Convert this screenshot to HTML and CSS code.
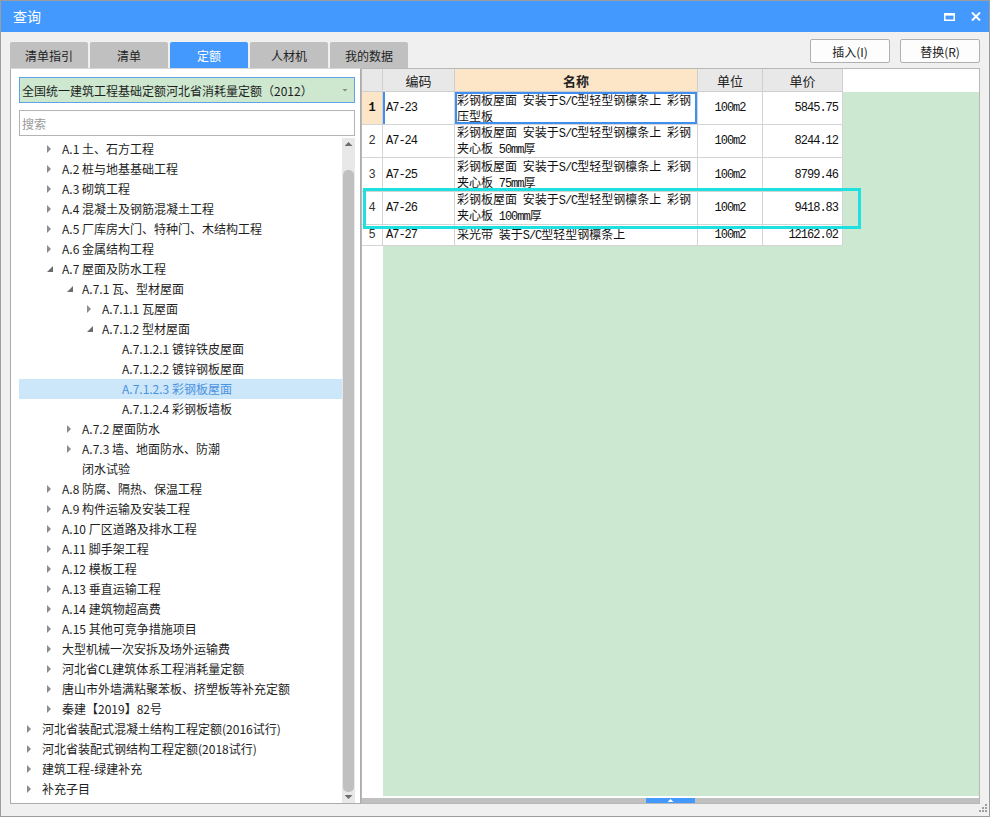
FILE: index.html
```html
<!DOCTYPE html>
<html lang="zh-CN">
<head>
<meta charset="utf-8">
<title>查询</title>
<link rel="stylesheet" href="styles.css">
</head>
<body>
<div class="window">
  <div class="titlebar">
    <span class="title">查询</span>
    <div class="winbtns">
      <svg width="11" height="8" viewBox="0 0 11 8"><path d="M0.75 1.5H10.25V7.25H0.75Z" fill="none" stroke="#fff" stroke-width="1.5"/><rect x="0" y="0" width="11" height="2.5" fill="#fff"/></svg>
      <svg width="10" height="9" viewBox="0 0 10 9"><path d="M1 0.5L9 8.5M9 0.5L1 8.5" stroke="#fff" stroke-width="2"/></svg>
    </div>
  </div>

  <div class="toolbar">
    <div class="tabs">
      <div class="tab">清单指引</div>
      <div class="tab">清单</div>
      <div class="tab active">定额</div>
      <div class="tab">人材机</div>
      <div class="tab">我的数据</div>
    </div>
    <div class="actions">
      <div class="btn">插入(I)</div>
      <div class="btn">替换(R)</div>
    </div>
  </div>

  <div class="main">
    <div class="left">
      <div class="combo"><span>全国统一建筑工程基础定额河北省消耗量定额（2012）</span><span class="combo-arrow"></span></div>
      <div class="search">搜索</div>
      <div class="treewrap">
        <div class="tree">
          <div class="row l1"><svg class="ar" viewBox="0 0 15 20"><path class="pc" d="M0 6L4 10L0 14Z"/></svg><span>A.1 土、石方工程</span></div>
          <div class="row l1"><svg class="ar" viewBox="0 0 15 20"><path class="pc" d="M0 6L4 10L0 14Z"/></svg><span>A.2 桩与地基基础工程</span></div>
          <div class="row l1"><svg class="ar" viewBox="0 0 15 20"><path class="pc" d="M0 6L4 10L0 14Z"/></svg><span>A.3 砌筑工程</span></div>
          <div class="row l1"><svg class="ar" viewBox="0 0 15 20"><path class="pc" d="M0 6L4 10L0 14Z"/></svg><span>A.4 混凝土及钢筋混凝土工程</span></div>
          <div class="row l1"><svg class="ar" viewBox="0 0 15 20"><path class="pc" d="M0 6L4 10L0 14Z"/></svg><span>A.5 厂库房大门、特种门、木结构工程</span></div>
          <div class="row l1"><svg class="ar" viewBox="0 0 15 20"><path class="pc" d="M0 6L4 10L0 14Z"/></svg><span>A.6 金属结构工程</span></div>
          <div class="row l1"><svg class="ar" viewBox="0 0 15 20"><path class="pe" d="M6 7V13H0Z"/></svg><span>A.7 屋面及防水工程</span></div>
          <div class="row l2"><svg class="ar" viewBox="0 0 15 20"><path class="pe" d="M6 7V13H0Z"/></svg><span>A.7.1 瓦、型材屋面</span></div>
          <div class="row l3"><svg class="ar" viewBox="0 0 15 20"><path class="pc" d="M0 6L4 10L0 14Z"/></svg><span>A.7.1.1 瓦屋面</span></div>
          <div class="row l3"><svg class="ar" viewBox="0 0 15 20"><path class="pe" d="M6 7V13H0Z"/></svg><span>A.7.1.2 型材屋面</span></div>
          <div class="row l4"><span class="ar"></span><span>A.7.1.2.1 镀锌铁皮屋面</span></div>
          <div class="row l4"><span class="ar"></span><span>A.7.1.2.2 镀锌钢板屋面</span></div>
          <div class="row l4 selected"><span class="ar"></span><span>A.7.1.2.3 彩钢板屋面</span></div>
          <div class="row l4"><span class="ar"></span><span>A.7.1.2.4 彩钢板墙板</span></div>
          <div class="row l2"><svg class="ar" viewBox="0 0 15 20"><path class="pc" d="M0 6L4 10L0 14Z"/></svg><span>A.7.2 屋面防水</span></div>
          <div class="row l2"><svg class="ar" viewBox="0 0 15 20"><path class="pc" d="M0 6L4 10L0 14Z"/></svg><span>A.7.3 墙、地面防水、防潮</span></div>
          <div class="row l2"><span class="ar"></span><span>闭水试验</span></div>
          <div class="row l1"><svg class="ar" viewBox="0 0 15 20"><path class="pc" d="M0 6L4 10L0 14Z"/></svg><span>A.8 防腐、隔热、保温工程</span></div>
          <div class="row l1"><svg class="ar" viewBox="0 0 15 20"><path class="pc" d="M0 6L4 10L0 14Z"/></svg><span>A.9 构件运输及安装工程</span></div>
          <div class="row l1"><svg class="ar" viewBox="0 0 15 20"><path class="pc" d="M0 6L4 10L0 14Z"/></svg><span>A.10 厂区道路及排水工程</span></div>
          <div class="row l1"><svg class="ar" viewBox="0 0 15 20"><path class="pc" d="M0 6L4 10L0 14Z"/></svg><span>A.11 脚手架工程</span></div>
          <div class="row l1"><svg class="ar" viewBox="0 0 15 20"><path class="pc" d="M0 6L4 10L0 14Z"/></svg><span>A.12 模板工程</span></div>
          <div class="row l1"><svg class="ar" viewBox="0 0 15 20"><path class="pc" d="M0 6L4 10L0 14Z"/></svg><span>A.13 垂直运输工程</span></div>
          <div class="row l1"><svg class="ar" viewBox="0 0 15 20"><path class="pc" d="M0 6L4 10L0 14Z"/></svg><span>A.14 建筑物超高费</span></div>
          <div class="row l1"><svg class="ar" viewBox="0 0 15 20"><path class="pc" d="M0 6L4 10L0 14Z"/></svg><span>A.15 其他可竞争措施项目</span></div>
          <div class="row l1"><svg class="ar" viewBox="0 0 15 20"><path class="pc" d="M0 6L4 10L0 14Z"/></svg><span>大型机械一次安拆及场外运输费</span></div>
          <div class="row l1"><svg class="ar" viewBox="0 0 15 20"><path class="pc" d="M0 6L4 10L0 14Z"/></svg><span>河北省CL建筑体系工程消耗量定额</span></div>
          <div class="row l1"><svg class="ar" viewBox="0 0 15 20"><path class="pc" d="M0 6L4 10L0 14Z"/></svg><span>唐山市外墙满粘聚苯板、挤塑板等补充定额</span></div>
          <div class="row l1"><svg class="ar" viewBox="0 0 15 20"><path class="pc" d="M0 6L4 10L0 14Z"/></svg><span>秦建【2019】82号</span></div>
          <div class="row l0"><svg class="ar" viewBox="0 0 15 20"><path class="pc" d="M0 6L4 10L0 14Z"/></svg><span>河北省装配式混凝土结构工程定额(2016试行)</span></div>
          <div class="row l0"><svg class="ar" viewBox="0 0 15 20"><path class="pc" d="M0 6L4 10L0 14Z"/></svg><span>河北省装配式钢结构工程定额(2018试行)</span></div>
          <div class="row l0"><svg class="ar" viewBox="0 0 15 20"><path class="pc" d="M0 6L4 10L0 14Z"/></svg><span>建筑工程-绿建补充</span></div>
          <div class="row l0"><svg class="ar" viewBox="0 0 15 20"><path class="pc" d="M0 6L4 10L0 14Z"/></svg><span>补充子目</span></div>
        </div>
        <div class="vscroll">
          <div class="vs-up"><span></span></div>
          <div class="vs-thumb"></div>
          <div class="vs-down"><span></span></div>
        </div>
      </div>
    </div>

    <div class="right">
      <div class="grid">
        <div class="h rn"></div>
        <div class="h">编码</div>
        <div class="h hname">名称</div>
        <div class="h">单位</div>
        <div class="h">单价</div>
        <div class="h hblank"></div>

        <div class="c rn cur">1</div>
        <div class="c code curl">A7-23</div>
        <div class="c name sel"><span class="t">彩钢板屋面 安装于<span class="m">S/C</span>型轻型钢檩条上 彩钢<br>压型板</span></div>
        <div class="c unit">100m2</div>
        <div class="c price">5845.75</div>
        <div class="fill"></div>

        <div class="c rn">2</div>
        <div class="c code">A7-24</div>
        <div class="c name"><span class="t">彩钢板屋面 安装于<span class="m">S/C</span>型轻型钢檩条上 彩钢<br>夹心板 <span class="m">50mm</span>厚</span></div>
        <div class="c unit">100m2</div>
        <div class="c price">8244.12</div>
        <div class="fill"></div>

        <div class="c rn">3</div>
        <div class="c code">A7-25</div>
        <div class="c name"><span class="t">彩钢板屋面 安装于<span class="m">S/C</span>型轻型钢檩条上 彩钢<br>夹心板 <span class="m">75mm</span>厚</span></div>
        <div class="c unit">100m2</div>
        <div class="c price">8799.46</div>
        <div class="fill"></div>

        <div class="c rn">4</div>
        <div class="c code">A7-26</div>
        <div class="c name"><span class="t">彩钢板屋面 安装于<span class="m">S/C</span>型轻型钢檩条上 彩钢<br>夹心板 <span class="m">100mm</span>厚</span></div>
        <div class="c unit">100m2</div>
        <div class="c price">9418.83</div>
        <div class="fill"></div>

        <div class="c rn">5</div>
        <div class="c code">A7-27</div>
        <div class="c name"><span class="t">采光带 装于<span class="m">S/C</span>型轻型钢檩条上</span></div>
        <div class="c unit">100m2</div>
        <div class="c price">12162.02</div>
        <div class="fill"></div>

        <div class="rn-empty"></div>
        <div class="fill fill-rest"></div>
      </div>
      <div class="hgap"></div>
      <div class="hscroll"><div class="hs-handle"><span></span></div></div>
      <div class="mark"></div>
    </div>
  </div>

  <div class="statusbar">
    <svg class="grip" width="9" height="9" viewBox="0 0 9 9"><g fill="#a0a0a0"><rect x="6" y="0" width="2" height="2"/><rect x="3" y="3" width="2" height="2"/><rect x="6" y="3" width="2" height="2"/><rect x="0" y="6" width="2" height="2"/><rect x="3" y="6" width="2" height="2"/><rect x="6" y="6" width="2" height="2"/></g></svg>
  </div>
</div>
</body>
</html>
```

FILE: styles.css
```css
* { box-sizing: border-box; }
html, body { margin: 0; padding: 0; }
body {
  font-family: "Noto Sans CJK SC", "Microsoft YaHei", sans-serif;
  font-size: 12px;
  color: #1e1e1e;
  background: #ffffff;
}
.window {
  width: 990px;
  height: 817px;
  border: 1px solid #9c9c9c;
  background: #f0f0f0;
  display: flex;
  flex-direction: column;
}
.titlebar {
  height: 31px;
  flex: none;
  background: #4499ff;
  color: #fff;
  display: flex;
  align-items: center;
  justify-content: space-between;
  padding: 0 8px 0 12px;
}
.title { font-size: 14px; line-height: 31px; }
.winbtns { display: flex; align-items: center; gap: 16px; }

.toolbar {
  height: 36px;
  flex: none;
  display: flex;
  justify-content: space-between;
  align-items: flex-start;
  padding: 0 9px;
}
.tabs { display: flex; gap: 2px; margin-top: 10px; }
.tab {
  width: 78px;
  height: 26px;
  background: #c0c0c0;
  border-radius: 2px 2px 0 0;
  display: flex;
  align-items: center;
  justify-content: center;
  color: #222;
  font-size: 12px;
}
.tab.active { background: #4499ff; color: #fff; }
.actions { display: flex; gap: 10px; margin-top: 7px; }
.btn {
  width: 80px;
  height: 24px;
  border: 1px solid #b0b0b0;
  border-radius: 2px;
  background: #fdfdfd;
  display: flex;
  align-items: center;
  justify-content: center;
  color: #222;
  font-size: 12px;
}

.main {
  height: 736px;
  flex: none;
  display: flex;
  padding: 0 9px;
}
.left {
  width: 351px;
  flex: none;
  background: #fff;
  border: 1px solid #acacac;
  border-top-color: #d8d8d8;
  display: flex;
  flex-direction: column;
  padding: 0 5px 0 8px;
}
.combo {
  margin-top: 8px;
  height: 26px;
  flex: none;
  background: #cde8cf;
  border: 1px solid #5ca3ea;
  display: flex;
  align-items: center;
  justify-content: space-between;
  padding: 0 6px 0 2px;
  color: #1e1e1e;
  white-space: nowrap;
}
.combo-arrow {
  display: block;
  width: 6px;
  height: 3px;
  background: #8a8a8a;
  clip-path: polygon(0 0, 100% 0, 50% 100%);
}
.search {
  margin-top: 7px;
  height: 26px;
  flex: none;
  border: 1px solid #b4b4b4;
  color: #9a9a9a;
  display: flex;
  align-items: center;
  padding-left: 2px;
}
.treewrap {
  margin-top: 2px;
  flex: 1;
  display: flex;
  min-height: 0;
}
.tree {
  flex: 1;
  overflow: hidden;
  padding-top: 1px;
}
.row {
  height: 20px;
  display: flex;
  align-items: center;
  white-space: nowrap;
  line-height: 20px;
  color: #1e1e1e;
}
.l0 { padding-left: 8px; }
.l1 { padding-left: 28px; }
.l2 { padding-left: 48px; }
.l3 { padding-left: 68px; }
.l4 { padding-left: 88px; }
.ar {
  display: block;
  width: 15px;
  height: 20px;
  flex: none;
}
.pc { fill: #8c8c8c; }
.pe { fill: #6c6c6c; }
.row.selected { background: #cce6fa; color: #4a92e0; }

.vscroll {
  width: 13px;
  flex: none;
  background: #e8e8e8;
  display: flex;
  flex-direction: column;
  padding: 0 1px;
}
.vs-up { height: 18px; flex: none; display: flex; justify-content: center; padding-top: 4px; }
.vs-up span {
  display: block;
  width: 8px;
  height: 4px;
  background: #6e6e6e;
  clip-path: polygon(50% 0, 100% 100%, 0 100%);
}
.vs-thumb {
  flex: 1;
  margin-top: 14px;
  background: #c0c0c0;
  border-radius: 5px;
}
.vs-down { height: 11px; flex: none; display: flex; justify-content: center; padding-top: 3px; }
.vs-down span {
  display: block;
  width: 8px;
  height: 4px;
  background: #6e6e6e;
  clip-path: polygon(0 0, 100% 0, 50% 100%);
}

.right {
  flex: 1;
  background: #fff;
  border: 1px solid #b8b8b8;
  display: flex;
  flex-direction: column;
  position: relative;
}
.grid {
  flex: 1;
  display: grid;
  grid-template-columns: 21px 72px 243px 65px 80px 1fr;
  grid-template-rows: 23px 33px 33px 34px 33px 21px 1fr;
  min-height: 0;
}
.h {
  background: #e8e8e8;
  border-right: 1px solid #cfcfcf;
  border-bottom: 1px solid #cfcfcf;
  display: flex;
  align-items: center;
  justify-content: center;
  font-size: 13px;
  color: #222;
}
.h.hname { background: #fde6c8; font-weight: bold; }
.h.hblank { background: #fff; border: none; }
.c {
  border-right: 1px solid #d4d4d4;
  border-bottom: 1px solid #d4d4d4;
  display: flex;
  align-items: center;
  white-space: nowrap;
  background: #fff;
}
.rn {
  justify-content: center;
  font-family: "Liberation Mono", monospace;
  font-size: 12px;
  color: #333;
}
.rn.cur { background: #fde6c8; font-weight: bold; color: #111; }
.code, .unit, .price {
  font-family: "Liberation Mono", monospace;
  font-size: 12px;
  letter-spacing: -1px;
  color: #111;
}
.code { padding-left: 3px; }
.curl { box-shadow: inset 2px 0 0 #3f8ef0; }
.unit { justify-content: center; }
.price { justify-content: flex-end; padding-right: 4px; }
.name {
  padding-left: 2px;
  font-size: 12px;
  color: #111;
}
.name .t { display: block; line-height: 14px; word-spacing: 3px; }
.name.sel { box-shadow: inset 0 0 0 2px #3f8ef0; }
.m {
  font-family: "Liberation Mono", monospace;
  font-size: 12px;
  letter-spacing: -1px;
}
.fill { background: #cce8d0; }
.rn-empty { background: #fff; }
.fill-rest { grid-column: 2 / 7; }
.hgap { height: 2px; flex: none; background: #fff; }
.hscroll {
  height: 5px;
  flex: none;
  background: #c0c0c0;
  display: flex;
}
.hs-handle {
  margin-left: 284px;
  width: 49px;
  background: #4499ff;
  display: flex;
  justify-content: center;
  padding-top: 1px;
}
.hs-handle span {
  display: block;
  width: 6px;
  height: 3px;
  background: #fff;
  clip-path: polygon(50% 0, 100% 100%, 0 100%);
}
.mark {
  position: absolute;
  left: 1px;
  top: 119px;
  width: 498px;
  height: 41px;
  border: 3px solid #1ee0e0;
}

.statusbar {
  flex: 1;
  display: flex;
  justify-content: flex-end;
  align-items: flex-start;
  padding-right: 1px;
}
.grip { display: block; }
```
